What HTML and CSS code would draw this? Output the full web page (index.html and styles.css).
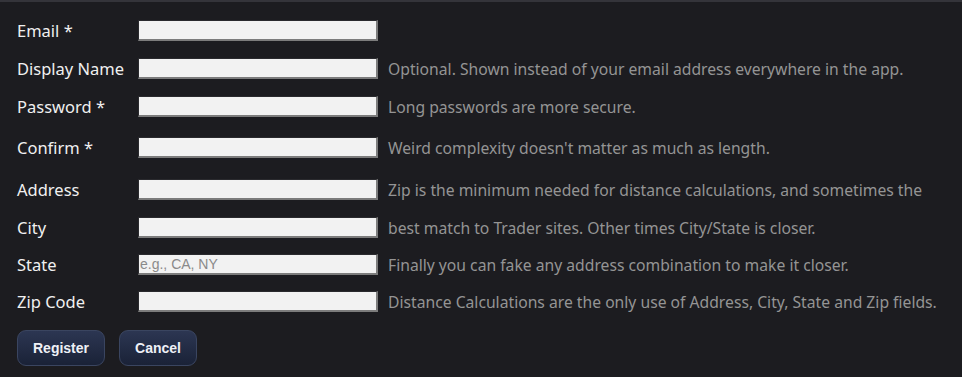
FILE: index.html
```html
<!DOCTYPE html>
<html>
<head>
<meta charset="utf-8">
<link rel="stylesheet" href="styles.css">
</head>
<body>
<div class="panel">
  <form class="form">
    <div class="row"><label class="lbl">Email *</label><input class="fld" type="text"><span class="hint"></span></div>
    <div class="row"><label class="lbl">Display Name</label><input class="fld" type="text"><span class="hint">Optional. Shown instead of your email address everywhere in the app.</span></div>
    <div class="row"><label class="lbl">Password *</label><input class="fld" type="password"><span class="hint">Long passwords are more secure.</span></div>
    <div class="row gap-a"><label class="lbl">Confirm *</label><input class="fld" type="password"><span class="hint">Weird complexity doesn't matter as much as length.</span></div>
    <div class="row gap-b"><label class="lbl">Address</label><input class="fld" type="text"><span class="hint">Zip is the minimum needed for distance calculations, and sometimes the</span></div>
    <div class="row"><label class="lbl">City</label><input class="fld" type="text"><span class="hint">best match to Trader sites. Other times City/State is closer.</span></div>
    <div class="row tight"><label class="lbl">State</label><input class="fld" type="text" placeholder="e.g., CA, NY"><span class="hint">Finally you can fake any address combination to make it closer.</span></div>
    <div class="row tight"><label class="lbl">Zip Code</label><input class="fld" type="text"><span class="hint">Distance Calculations are the only use of Address, City, State and Zip fields.</span></div>
    <div class="actions">
      <button class="btn" type="button">Register</button>
      <button class="btn" type="button">Cancel</button>
    </div>
  </form>
</div>
</body>
</html>
```

FILE: styles.css
```css
html, body {
  margin: 0;
  padding: 0;
  background: #1c1c20;
}
.panel {
  width: 962px;
  height: 377px;
  box-sizing: border-box;
  border-top: 2px solid #34343a;
  background: #1c1c20;
  padding: 18px 0 0 17px;
  font-family: "Noto Sans", "Open Sans", sans-serif;
}
.form {
  display: flex;
  flex-direction: column;
}
.row {
  display: flex;
  align-items: center;
  height: 21px;
  margin-bottom: 17px;
}
.row.gap-a { margin-top: 3px; }
.row.gap-b { margin-top: 4px; }
.row.tight { margin-top: -1px; }
.lbl {
  width: 121px;
  flex: none;
  color: #f0f0f0;
  font-size: 16.5px;
  white-space: nowrap;
}
.fld {
  width: 240px;
  height: 21px;
  box-sizing: border-box;
  margin: 0;
  padding: 0 0 0 1px;
  background: #f2f2f2;
  border: none;
  border-right: 2px solid #7c7c7c;
  border-bottom: 2px solid #7c7c7c;
  border-top: 1px solid #2a2a2e;
  border-left: 1px solid #2a2a2e;
  font-family: "Liberation Sans", Arial, sans-serif;
  font-size: 14px;
  color: #222;
  outline: none;
}
.fld::placeholder {
  color: #8a8a8a;
}
.hint {
  margin-left: 10px;
  color: #949494;
  font-size: 15.7px;
  white-space: nowrap;
}
.actions {
  display: flex;
  gap: 14px;
  margin-top: 1px;
}
.btn {
  height: 36px;
  padding: 0 15px;
  border-radius: 9px;
  border: 1px solid #3a4560;
  background: linear-gradient(#2c3652, #1a2237);
  color: #eef0f6;
  font-family: "Liberation Sans", Arial, sans-serif;
  font-weight: bold;
  font-size: 14px;
  cursor: pointer;
}
```
